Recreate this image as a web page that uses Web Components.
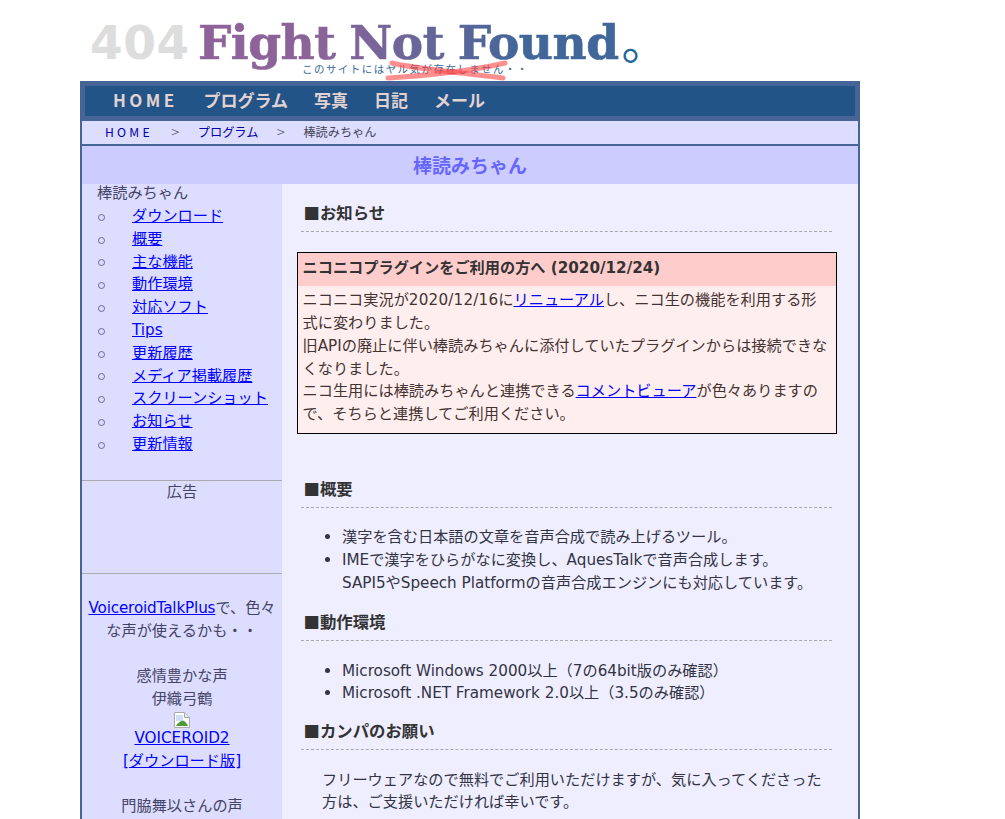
<!DOCTYPE html>
<html lang="ja">
<head>
<meta charset="utf-8">
<title>棒読みちゃん</title>
<style>
  html { height: 100%; overflow: hidden; }
  body {
    margin: 0;
    background: #fff;
    color: #334;
    font: 15.2px/1.5 "DejaVu Sans", "Noto Sans CJK JP", sans-serif;
  }
</style>
</head>
<body>
<site-logo></site-logo>
<site-frame>
  <site-nav slot="nav">
    <a href="#" class="wide">HOME</a><a href="#">プログラム</a><a href="#">写真</a><a href="#">日記</a><a href="#">メール</a>
  </site-nav>
  <bread-crumb slot="crumb"></bread-crumb>
  <page-title slot="title">棒読みちゃん</page-title>

  <side-bar slot="side"></side-bar>

  <main-area slot="main">
    <sec-head>お知らせ</sec-head>
    <notice-box>
      <span slot="head">ニコニコプラグインをご利用の方へ (2020/12/24)</span>
      ニコニコ実況が<span class="date">2020/12/16</span>に<a href="#">リニューアル</a>し、ニコ生の機能を利用する形式に変わりました。<br>
      旧APIの廃止に伴い棒読みちゃんに添付していたプラグインからは接続できなくなりました。<br>
      ニコ生用には棒読みちゃんと連携できる<a href="#">コメントビューア</a>が色々ありますので、そちらと連携してご利用ください。
    </notice-box>

    <sec-head style="margin-top:37px">概要</sec-head>
    <dot-list>
      <li>漢字を含む日本語の文章を音声合成で読み上げるツール。</li>
      <li>IMEで漢字をひらがなに変換し、AquesTalkで音声合成します。<br>SAPI5やSpeech Platformの音声合成エンジンにも対応しています。</li>
    </dot-list>

    <sec-head>動作環境</sec-head>
    <dot-list>
      <li>Microsoft Windows 2000以上（7の64bit版のみ確認）</li>
      <li>Microsoft .NET Framework 2.0以上（3.5のみ確認）</li>
    </dot-list>

    <sec-head style="margin-top:8px">カンパのお願い</sec-head>
    <text-block>フリーウェアなので無料でご利用いただけますが、気に入ってくださった方は、ご支援いただければ幸いです。</text-block>
  </main-area>
</site-frame>

<script>
class SiteLogo extends HTMLElement {
  constructor() {
    super()
    this.attachShadow({ mode: 'open' })
    this.shadowRoot.innerHTML = `
      <style>
        :host { display: block; width: 780px; height: 81px; margin-left: 80px; overflow: hidden; position: relative; }
        .row { display: flex; align-items: baseline; padding: 17px 0 0 10px; height: 45px; white-space: nowrap; }
        .num { font: bold 47px/45px "DejaVu Sans", sans-serif; letter-spacing: .6px; color: #ddd; width: 108px; }
        .name {
          font: bold 47px/45px "DejaVu Serif", serif;
          letter-spacing: -.5px;
          word-spacing: -2px;
          -webkit-text-stroke: .7px transparent;
          background: linear-gradient(90deg, #8f6399 0, #8a6399 30%, #5d6699 60%, #40669a 78%);
          -webkit-background-clip: text; background-clip: text;
          color: transparent;
          padding-bottom: 10px;
        }
        .dot { font: 46px/45px "Noto Sans CJK JP", sans-serif; color: #1f6a9a; margin-left: 3px; }
        .tag {
          margin: 1px 0 0 222px;
          font: 10.5px/13px "Liberation Serif", "Noto Sans CJK JP", serif;
          letter-spacing: 1.45px;
          color: #3a6a96;
          white-space: nowrap;
        }
        svg { position: absolute; left: 305px; top: 60px; }
      </style>
      <div class="row"><span class="num">404</span><span class="name">Fight Not Found</span><span class="dot">。</span></div>
      <div class="tag">このサイトにはヤル気が存在しません・・</div>
      <svg width="124" height="21" viewBox="0 0 124 21" fill="none" stroke="#f44" stroke-opacity=".6" stroke-width="5" stroke-linecap="round">
        <path d="M7 3C25 8 70 12 118 18"/>
        <path d="M3 18C50 15 90 10 120 3"/>
      </svg>
    `
  }
}
customElements.define('site-logo', SiteLogo)

class SiteFrame extends HTMLElement {
  constructor() {
    super()
    this.attachShadow({ mode: 'open' })
    this.shadowRoot.innerHTML = `
      <style>
        :host { display: block; width: 776px; margin-left: 80px; border: solid #466496; border-width: 0 2px; background: #eef; }
        .cols { display: flex; align-items: stretch; }
        ::slotted([slot=side]) { flex: 0 0 200px; }
        ::slotted([slot=main]) { flex: 1; min-width: 0; }
      </style>
      <slot name="nav"></slot>
      <slot name="crumb"></slot>
      <slot name="title"></slot>
      <div class="cols"><slot name="side"></slot><slot name="main"></slot></div>
    `
  }
}
customElements.define('site-frame', SiteFrame)

class SiteNav extends HTMLElement {
  constructor() {
    super()
    this.attachShadow({ mode: 'open' })
    this.shadowRoot.innerHTML = `
      <style>
        :host {
          display: flex; align-items: center; gap: 26px;
          height: 28px; margin: 0 -2px; padding: 0 0 2px 28px;
          border: 5px solid #466496;
          background: #235487;
          font: bold 17px/28px "Noto Sans CJK JP", sans-serif;
        }
        ::slotted(a) { color: #e2d2d2; text-decoration: none; }
        ::slotted(a.wide) { letter-spacing: 3.4px; }
      </style>
      <slot></slot>
    `
  }
}
customElements.define('site-nav', SiteNav)

class BreadCrumb extends HTMLElement {
  constructor() {
    super()
    this.attachShadow({ mode: 'open' })
    this.shadowRoot.innerHTML = `
      <style>
        :host {
          display: flex; align-items: center;
          height: 22px; padding: 0 0 1px 23px;
          background: #ddf; border-bottom: 2px solid #466496;
          font: 12.2px/22px "Noto Sans CJK JP", sans-serif;
          color: #445;
        }
        a { color: #00a; text-decoration: none; }
        .home { letter-spacing: 3.2px; }
        i { font-style: normal; width: 45px; text-align: center; font-size: 15px; font-weight: 300; color: #556; }
      </style>
      <a class="home" href="#">HOME</a><i>&gt;</i><a href="#">プログラム</a><i>&gt;</i><span>棒読みちゃん</span>
    `
  }
}
customElements.define('bread-crumb', BreadCrumb)

class PageTitle extends HTMLElement {
  constructor() {
    super()
    this.attachShadow({ mode: 'open' })
    this.shadowRoot.innerHTML = `
      <style>
        :host {
          display: block; height: 38px;
          background: #ccf; color: #66f; text-align: center;
          font: bold 19px/38px "Noto Sans CJK JP", sans-serif;
        }
      </style>
      <slot></slot>
    `
  }
}
customElements.define('page-title', PageTitle)

class SideBar extends HTMLElement {
  constructor() {
    super()
    this.attachShadow({ mode: 'open' })
    const links = ['ダウンロード', '概要', '主な機能', '動作環境', '対応ソフト', 'Tips', '更新履歴', 'メディア掲載履歴', 'スクリーンショット', 'お知らせ', '更新情報']
    this.shadowRoot.innerHTML = `
      <style>
        :host { display: block; background: #ddf; color: #446; }
        a { color: #00f; }
        .top { padding: 0 0 0 15px; line-height: 19px; height: 21px; }
        ul { list-style: none; margin: 0; padding: 0 0 0 16px; }
        li { display: flex; align-items: center; height: 22.8px; }
        li::before {
          content: ""; box-sizing: border-box; width: 7px; height: 7px;
          margin: 2px 27px 0 0; border: 1.5px solid #66a; border-radius: 50%;
        }
        hr { border: 0; border-top: 1px solid #aaa; margin: 0; }
        .ad { text-align: center; height: 92px; line-height: 22px; }
        .info { text-align: center; padding: 23px 4px 0; }
        .info p { margin: 0 0 22.4px; }
        .tp { letter-spacing: -.15px; }
        svg { display: block; margin: 2px auto -1.4px; }
      </style>
      <div class="top">棒読みちゃん</div>
      <ul>${links.map(t => `<li><a href="#">${t}</a></li>`).join('')}</ul>
      <hr style="margin-top:24px">
      <div class="ad">広告</div>
      <hr>
      <div class="info">
        <p><a class="tp" href="#">VoiceroidTalkPlus</a>で、色々な声が使えるかも・・</p>
        <p>感情豊かな声<br>伊織弓鶴
          <svg width="16" height="16" viewBox="0 0 16 16">
            <path d="M.5.5h10l5 5v10H.5z" fill="#fff" stroke="#aaa"/>
            <path d="M10.5.5v5h5" fill="#e8e8e8" stroke="#aaa"/>
            <path d="M2 3h7v6H2z" fill="#cfe0f5"/>
            <path d="M2 14c2-4 6-6 8-5 2 1 3 3 4 5z" fill="#4c9a3a"/>
          </svg>
          <a href="#">VOICEROID2</a><br><a href="#">[ダウンロード版]</a></p>
        <p>門脇舞以さんの声</p>
      </div>
    `
  }
}
customElements.define('side-bar', SideBar)

class MainArea extends HTMLElement {
  constructor() {
    super()
    this.attachShadow({ mode: 'open' })
    this.shadowRoot.innerHTML = `
      <style>
        :host { display: block; padding: 1px 26px 0 15px; background: #eef; }
      </style>
      <slot></slot>
    `
  }
}
customElements.define('main-area', MainArea)

class SecHead extends HTMLElement {
  constructor() {
    super()
    this.attachShadow({ mode: 'open' })
    this.shadowRoot.innerHTML = `
      <style>
        :host {
          display: block; height: 36px; margin: 9.6px 0 0 4px; padding-left: 2.5px;
          border-bottom: 1px dashed #aaa;
          font: bold 16.4px/35px "Noto Sans CJK JP", sans-serif;
          color: #333;
        }
      </style>
      ■<slot></slot>
    `
  }
}
customElements.define('sec-head', SecHead)

class NoticeBox extends HTMLElement {
  constructor() {
    super()
    this.attachShadow({ mode: 'open' })
    this.shadowRoot.innerHTML = `
      <style>
        :host { display: block; margin: 20px -5px 0 0; border: 1px solid #000; background: #fee; color: #433; }
        .head { height: 33px; padding: 0 4.5px; background: #fcc; color: #333; font: bold 15.2px/31px "DejaVu Sans", "Noto Sans CJK JP", sans-serif; }
        .body { padding: 3.6px 6px 6.8px 4.5px; }
        ::slotted(a) { color: #00f; }
        ::slotted(.date) { letter-spacing: .2px; }
      </style>
      <div class="head"><slot name="head"></slot></div>
      <div class="body"><slot></slot></div>
    `
  }
}
customElements.define('notice-box', NoticeBox)

class DotList extends HTMLElement {
  constructor() {
    super()
    this.attachShadow({ mode: 'open' })
    this.shadowRoot.innerHTML = `
      <style>
        :host { display: block; margin: 18.4px 0 0; padding-left: 45px; color: #334; }
        ::slotted(li) { display: block; }
        ::slotted(li)::before {
          content: ""; display: inline-block; width: 5px; height: 5px; border-radius: 50%;
          background: #334; margin: 0 12px 2px -17px; vertical-align: middle;
        }
      </style>
      <slot></slot>
    `
  }
}
customElements.define('dot-list', DotList)

class TextBlock extends HTMLElement {
  constructor() {
    super()
    this.attachShadow({ mode: 'open' })
    this.shadowRoot.innerHTML = `
      <style>
        :host { display: block; margin: 18.4px 0 0 25px; color: #334; }
      </style>
      <slot></slot>
    `
  }
}
customElements.define('text-block', TextBlock)
</script>
</body>
</html>
